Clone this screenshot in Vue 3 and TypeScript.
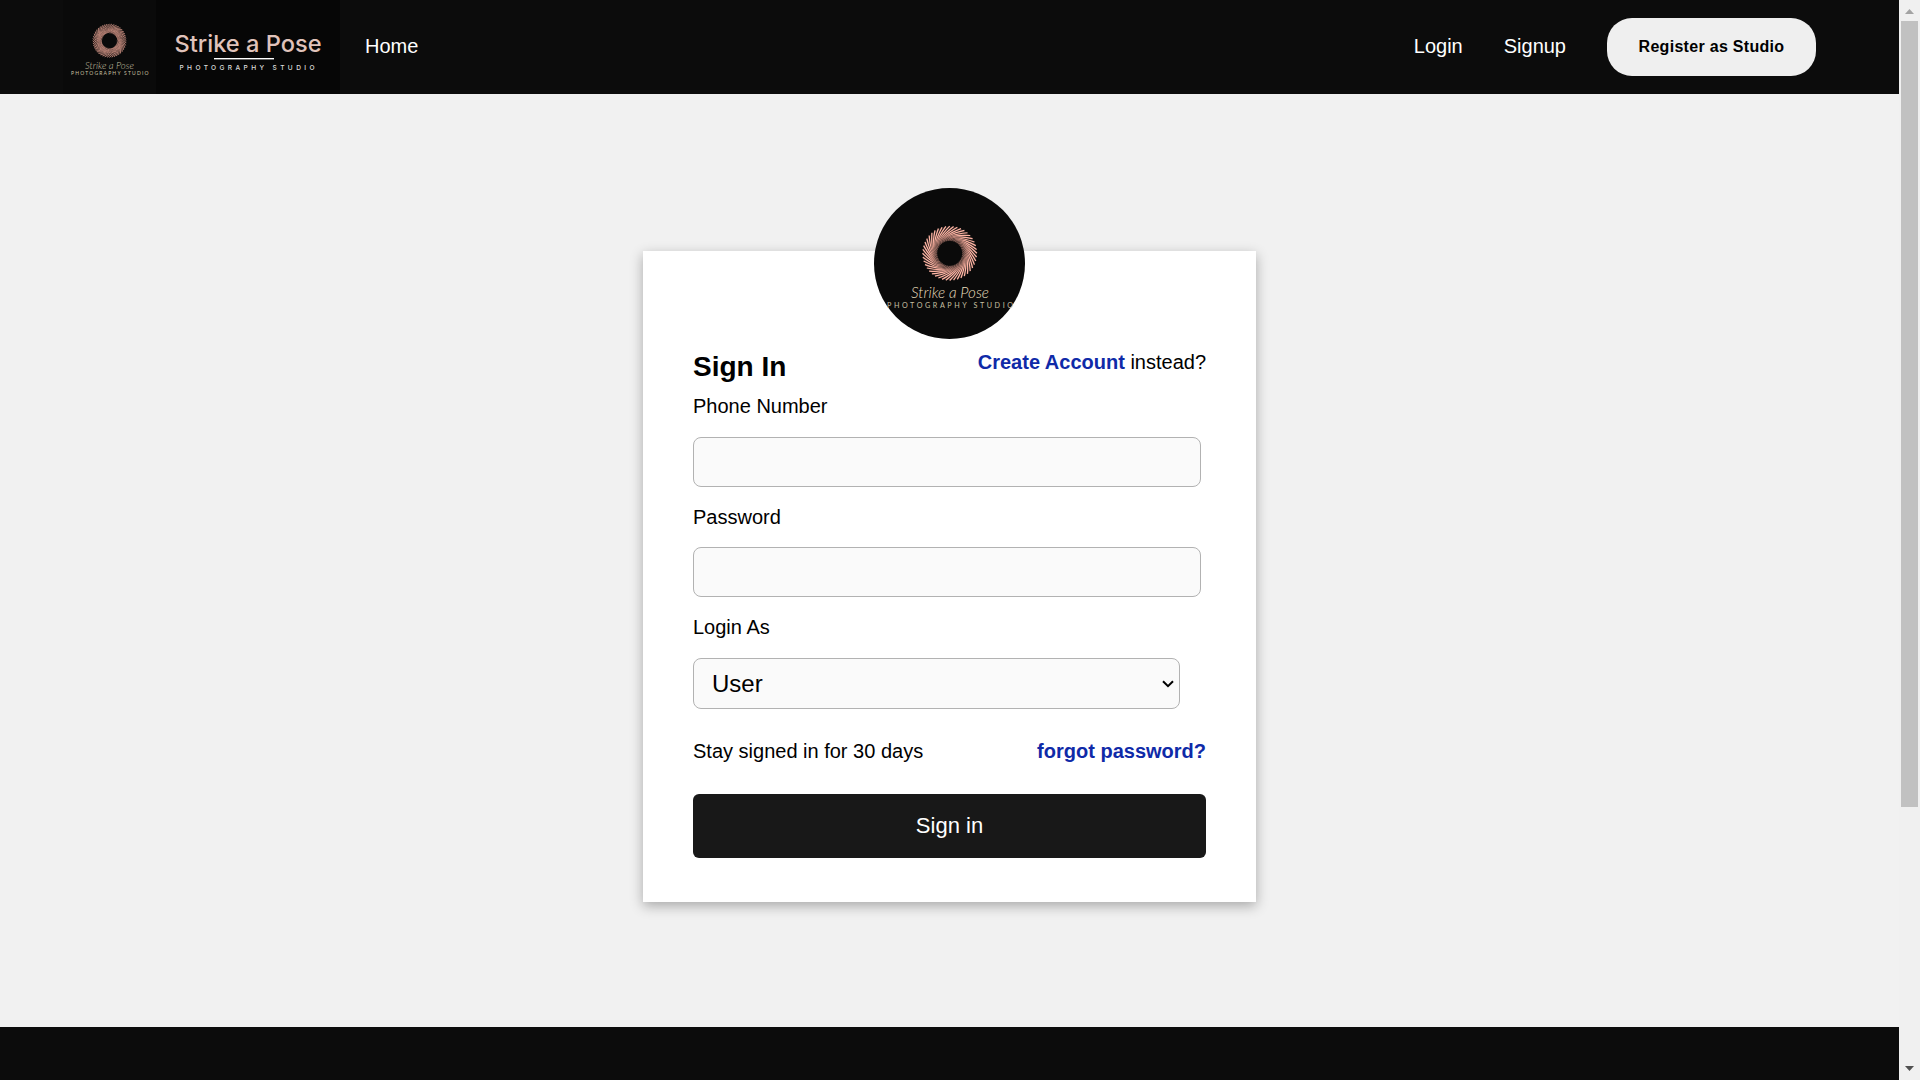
<script setup lang="ts">
import { ref } from 'vue'

const phone = ref('')
const password = ref('')
const role = ref('User')

// Thin curved blades that sweep around the lens opening.
const count = 44
const blades: string[] = Array.from({ length: count }, (_, i) => {
  const at = (r: number, turn: number): string => {
    const a = (i / count) * Math.PI * 2 + turn
    return `${(r * Math.cos(a)).toFixed(2)} ${(r * Math.sin(a)).toFixed(2)}`
  }
  return `M${at(12.6, 0)} Q${at(19, 0.15)} ${at(27.2, 1)}`
})
</script>

<template>
  <div class="window">
    <div class="page">
      <header class="nav">
        <svg class="mark" viewBox="0 0 93 94">
          <g transform="translate(46.5 40.7) scale(.62)">
            <circle r="19.6" class="ring" />
            <path v-for="(d, i) in blades" :key="i" :d="d" class="blade small" />
          </g>
          <text x="22" y="68.5" textLength="49" lengthAdjust="spacingAndGlyphs" class="script" font-size="10">Strike a Pose</text>
          <text x="8" y="75" textLength="77.5" class="caps" font-size="5">PHOTOGRAPHY STUDIO</text>
        </svg>
        <svg class="wordmark" viewBox="0 0 184 94">
          <text x="18.5" y="52" textLength="147" lengthAdjust="spacingAndGlyphs" class="brand">Strike a Pose</text>
          <rect x="58" y="58" width="60" height="1.4" fill="#fff" />
          <text x="23.5" y="70" textLength="135" class="tagline">PHOTOGRAPHY STUDIO</text>
        </svg>
        <a class="link home">Home</a>
        <nav class="links">
          <a class="link">Login</a>
          <a class="link">Signup</a>
          <button class="register" type="button">Register as Studio</button>
        </nav>
      </header>

      <main class="main">
        <form class="card" @submit.prevent>
          <svg class="avatar" viewBox="0 0 151 151">
            <defs>
              <radialGradient id="glow" gradientUnits="userSpaceOnUse" cx="0" cy="0" r="27.5">
                <stop offset=".45" stop-color="#6d4d46" />
                <stop offset=".6" stop-color="#b57e72" />
                <stop offset=".75" stop-color="#ffb5a5" />
              </radialGradient>
            </defs>
            <circle cx="75.5" cy="75.5" r="75.5" fill="#0a0a0a" />
            <g transform="translate(75.7 65.3)">
              <circle r="19.6" class="ring" />
              <path v-for="(d, i) in blades" :key="i" :d="d" class="blade" />
            </g>
            <text x="37" y="109.5" textLength="78" lengthAdjust="spacingAndGlyphs" class="script" font-size="16">Strike a Pose</text>
            <text x="13" y="120" textLength="126" class="caps" font-size="7.2">PHOTOGRAPHY STUDIO</text>
          </svg>
          <div class="heading">
            <h2>Sign In</h2>
            <p><a>Create Account</a> instead?</p>
          </div>
          <label for="phone">Phone Number</label>
          <input id="phone" v-model="phone" type="text">
          <label for="password" class="lower">Password</label>
          <input id="password" v-model="password" type="password">
          <label for="role" class="lower">Login As</label>
          <div class="picker">
            <select id="role" v-model="role">
              <option>User</option>
              <option>Studio</option>
            </select>
            <svg class="chevron" viewBox="0 0 12 8"><path d="M1 1.2l5 5 5-5" fill="none" stroke="#000" stroke-width="2" /></svg>
          </div>
          <div class="options">
            <span>Stay signed in for 30 days</span>
            <a>forgot password?</a>
          </div>
          <button class="submit" type="submit">Sign in</button>
        </form>
      </main>
      <footer class="footer"></footer>
    </div>

    <div class="scrollbar">
      <svg class="arrow" viewBox="0 0 21 21"><path d="M6 14h9l-4.5-5z" fill="#a3a3a3" /></svg>
      <div class="thumb"></div>
      <svg class="arrow" viewBox="0 0 21 21"><path d="M6 7h9l-4.5 5z" fill="#505050" /></svg>
    </div>
  </div>
</template>

<style>
body {
  overflow: hidden;
}
</style>

<style scoped>
.window {
  display: flex;
  width: 1920px;
  height: 1080px;
  overflow: hidden;
  font-family: "Liberation Sans", Arial, sans-serif;
  font-size: 20px;
  line-height: 23px;
  color: #000;
}
.window * {
  box-sizing: border-box;
}
.page {
  display: flex;
  flex-direction: column;
  width: 1899px;
  background: #f1f1f1;
}
.nav {
  display: flex;
  align-items: center;
  height: 94px;
  padding: 0 83px 0 63px;
  background: #0c0c0c;
}
.mark {
  width: 93px;
  height: 94px;
  background: #0a0a0a;
}
.wordmark {
  width: 184px;
  height: 94px;
  background: #060606;
}
.link {
  padding-bottom: 2px;
  color: #fff;
}
.home {
  margin: 0 auto 0 25px;
}
.links {
  display: flex;
  align-items: center;
  gap: 41px;
}
.register {
  width: 209px;
  height: 58px;
  padding: 0;
  border: 0;
  border-radius: 25px;
  background: #efefef;
  color: #000;
  font: bold 16px "Liberation Sans", Arial, sans-serif;
  letter-spacing: 0.3px;
}
.main {
  display: flex;
  justify-content: center;
  height: 933px;
  padding-top: 157px;
}
.card {
  display: flex;
  flex-direction: column;
  width: 613px;
  height: 651px;
  padding: 0 50px;
  background: #fff;
  box-shadow: 0 4px 12px rgba(0, 0, 0, 0.3);
}
.avatar {
  flex: none;
  width: 151px;
  height: 151px;
  margin: -63px auto 0;
}
.heading {
  display: flex;
  justify-content: space-between;
  height: 56px;
  padding-top: 12px;
}
h2 {
  margin: 0;
  font-size: 28px;
  line-height: 32px;
}
p {
  margin: 0;
}
.heading a,
.options a {
  color: #0f2aa8;
  font-weight: bold;
}
label {
  height: 23px;
  margin-bottom: 19px;
}
.lower {
  margin: 1px 0 18px;
}
input,
select {
  width: 508px;
  height: 50px;
  margin: 0 0 18px;
  padding: 0 18px;
  border: 1px solid #b2b2b2;
  border-radius: 8px;
  outline: 0;
  background: #fafafa;
  font: 24px "Liberation Sans", Arial, sans-serif;
  color: #000;
}
.picker {
  position: relative;
  width: 487px;
  height: 51px;
  margin: 1px 0 31px;
}
select {
  width: 487px;
  height: 51px;
  margin: 0;
  appearance: none;
}
.chevron {
  position: absolute;
  top: 22px;
  right: 6px;
  width: 12px;
  height: 8px;
  pointer-events: none;
}
.options {
  display: flex;
  justify-content: space-between;
  height: 23px;
}
.submit {
  height: 64px;
  margin-top: 31px;
  border: 0;
  border-radius: 6px;
  background: #181818;
  color: #fff;
  font: 22px "Liberation Sans", Arial, sans-serif;
}
.footer {
  height: 53px;
  background: #0c0c0c;
}
.ring {
  fill: none;
  stroke: #e9a798;
  stroke-opacity: 0.12;
  stroke-width: 14.5px;
}
.blade {
  fill: none;
  stroke: url(#glow);
  stroke-width: 1.25px;
}
.small {
  stroke: #c48a7d;
  stroke-width: 1.4px;
}
.script {
  fill: #e6dcbc;
  font-family: Lato, sans-serif;
  font-style: italic;
  font-weight: 300;
}
.mark .script {
  fill: #c8c0a6;
}
.caps {
  fill: #c9c0a2;
  font-family: Lato, sans-serif;
}
.brand {
  fill: #e0c3bb;
  font: 500 23.5px Inter, sans-serif;
}
.tagline {
  fill: #ddd;
  font: 500 6.6px Inter, sans-serif;
}
.scrollbar {
  display: flex;
  flex-direction: column;
  align-items: center;
  width: 21px;
  background: #f0f0f0;
}
.arrow {
  width: 21px;
  height: 21px;
}
.thumb {
  width: 17px;
  height: 786px;
  margin-bottom: auto;
  background: #c1c1c1;
}
</style>
